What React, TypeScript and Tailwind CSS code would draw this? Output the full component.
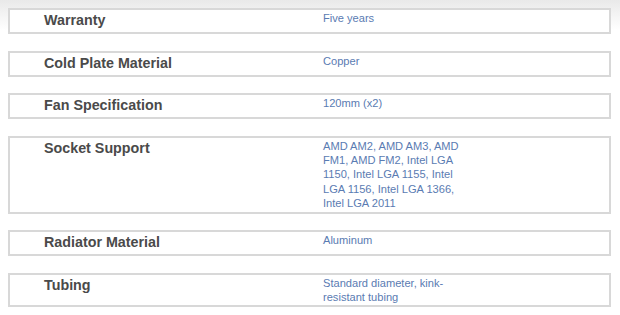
import React from 'react';

const specs = [
  { label: 'Warranty', value: 'Five years' },
  { label: 'Cold Plate Material', value: 'Copper' },
  { label: 'Fan Specification', value: '120mm (x2)' },
  {
    label: 'Socket Support',
    value: 'AMD AM2, AMD AM3, AMD FM1, AMD FM2, Intel LGA 1150, Intel LGA 1155, Intel LGA 1156, Intel LGA 1366, Intel LGA 2011',
  },
  { label: 'Radiator Material', value: 'Aluminum' },
  { label: 'Tubing', value: 'Standard diameter, kink-resistant tubing' },
];

const App = () => {
  return (
    <div className="w-[620px] h-[315px] overflow-hidden bg-gradient-to-b from-[#e9e9e9] via-white via-[30px] to-white font-['Liberation_Sans',Arial,sans-serif]">
      <div className="flex flex-col gap-[16.5px] pt-2 pl-2 w-[611px]">
        {specs.map((row) => (
          <div key={row.label} className="flex border-2 border-[#d8d8d8] bg-white">
            {/* label column */}
            <div className="w-[313px] shrink-0 pl-[34px] pt-[2px] pb-[3px] text-[14.3px] leading-[17px] font-bold text-[#4a4a4a]">
              {row.label}
            </div>
            {/* value column */}
            <div className="w-[150px] pt-[1px] pb-[1px] text-[11.1px] leading-[14.4px] text-[#5a7bb2]">
              {row.value}
            </div>
          </div>
        ))}
      </div>
    </div>
  );
};

export default App;
